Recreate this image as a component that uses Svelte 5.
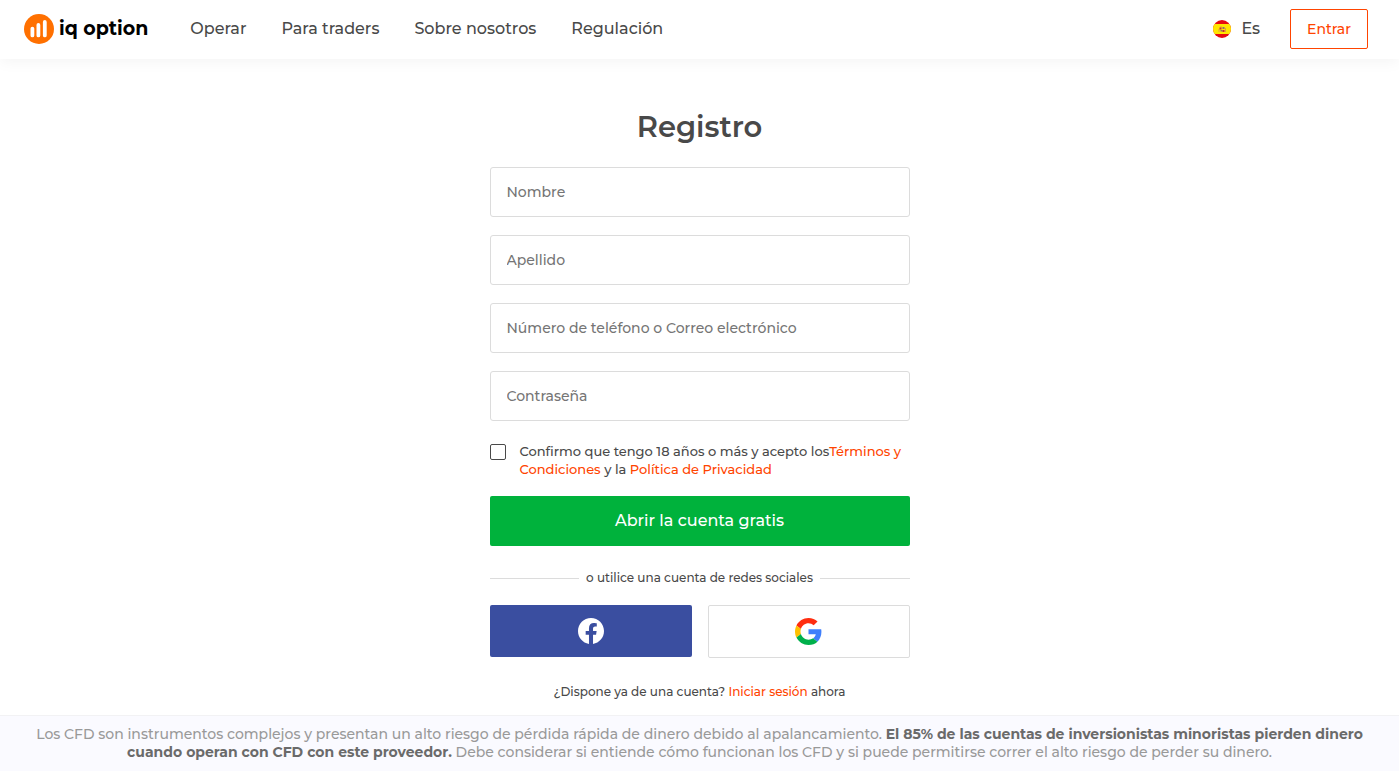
<script lang="ts">
	const navItems = ['Operar', 'Para traders', 'Sobre nosotros', 'Regulación'];

	const fields = [
		{ id: 'first-name', type: 'text', label: 'Nombre' },
		{ id: 'last-name', type: 'text', label: 'Apellido' },
		{ id: 'identifier', type: 'text', label: 'Número de teléfono o Correo electrónico' },
		{ id: 'password', type: 'password', label: 'Contraseña' }
	];

	let values: Record<string, string> = $state({});
	let accepted = $state(false);
</script>

<div class="page">
	<header class="header">
		<a class="logo" href="/" aria-label="iq option">
			<svg width="30" height="30" viewBox="0 0 30 30" aria-hidden="true">
				<circle cx="15" cy="15" r="15" fill="#ff7000" />
				<g stroke="#fff" stroke-width="3.8" stroke-linecap="round">
					<path d="M8.4 14.6v6.8M14.4 11v10.4M20.8 8v13.4" />
				</g>
			</svg>
			<span class="logo-text">iq option</span>
		</a>
		<nav class="nav">
			{#each navItems as item}
				<a href="/">{item}</a>
			{/each}
		</nav>
		<button class="language" type="button">
			<svg width="18" height="18" viewBox="0 0 18 18" aria-hidden="true">
				<clipPath id="flag"><circle cx="9" cy="9" r="9" /></clipPath>
				<g clip-path="url(#flag)">
					<path fill="#e60a10" d="M0 0h18v18H0z" />
					<path fill="#ffe600" d="M0 4h18v10H0z" />
					<path fill="#e0a040" d="M5.5 9h1v3h-1zM12 8h1v4h-1zM7 6.5h2v1H7z" />
					<path fill="#c4283a" d="M6.5 7.5h2v2h-2zM9.5 10h2v2h-2z" />
					<path fill="#8b6a75" d="M9.5 7h2v2h-2zM7.5 10h2v1.5h-2z" />
				</g>
			</svg>
			Es
		</button>
		<a class="login" href="/">Entrar</a>
	</header>

	<main class="main">
		<h1>Registro</h1>
		<form class="form" onsubmit={(e) => e.preventDefault()}>
			{#each fields as field}
				<input
					class="field"
					id={field.id}
					type={field.type}
					placeholder={field.label}
					aria-label={field.label}
					bind:value={values[field.id]}
				/>
			{/each}

			<div class="terms">
				<input id="terms" type="checkbox" bind:checked={accepted} />
				<label for="terms">
					Confirmo que tengo 18 años o más y acepto los<a href="/">Términos y Condiciones</a> y la
					<a href="/">Política de Privacidad</a>
				</label>
			</div>

			<button class="submit" type="submit">Abrir la cuenta gratis</button>
		</form>

		<div class="divider">o utilice una cuenta de redes sociales</div>

		<div class="social">
			<button class="facebook" type="button" aria-label="Facebook">
				<svg width="26" height="26" viewBox="0 0 24 24" aria-hidden="true">
					<path
						fill="#fff"
						d="M24 12.07C24 5.4 18.63 0 12 0S0 5.4 0 12.07c0 6.03 4.39 11.02 10.13 11.93v-8.44H7.08v-3.49h3.05V9.41c0-3.02 1.79-4.69 4.53-4.69 1.31 0 2.68.24 2.68.24v2.97h-1.51c-1.49 0-1.96.93-1.96 1.89v2.25h3.33l-.53 3.49h-2.8V24C19.61 23.09 24 18.1 24 12.07z"
					/>
				</svg>
			</button>
			<button class="google" type="button" aria-label="Google">
				<svg width="27" height="27" viewBox="0 0 48 48" aria-hidden="true">
					<path fill="#ff2d0f" d="M24 9.5c3.54 0 6.71 1.22 9.21 3.6l6.85-6.85C35.9 2.38 30.47 0 24 0 14.62 0 6.51 5.38 2.56 13.22l7.98 6.19C12.43 13.72 17.74 9.5 24 9.5z" />
					<path fill="#3f7ffb" d="M46.98 24.55c0-1.57-.15-3.09-.38-4.55H24v9.02h12.94c-.58 2.96-2.26 5.48-4.78 7.18l7.73 6c4.51-4.18 7.09-10.36 7.09-17.65z" />
					<path fill="#ffc000" d="M10.53 28.59c-.48-1.45-.76-2.99-.76-4.59s.27-3.14.76-4.59l-7.98-6.19C.92 16.46 0 20.12 0 24s.92 7.54 2.56 10.78l7.97-6.19z" />
					<path fill="#00b04b" d="M24 48c6.48 0 11.93-2.13 15.89-5.81l-7.73-6c-2.15 1.45-4.92 2.3-8.16 2.3-6.26 0-11.57-4.22-13.47-9.91l-7.98 6.19C6.51 42.62 14.62 48 24 48z" />
				</svg>
			</button>
		</div>

		<p class="signin">¿Dispone ya de una cuenta? <a href="/">Iniciar sesión</a> ahora</p>
	</main>

	<footer class="risk">
		Los CFD son instrumentos complejos y presentan un alto riesgo de pérdida rápida de dinero debido al
		apalancamiento. <strong>El 85% de las cuentas de inversionistas minoristas pierden dinero cuando
		operan con CFD con este proveedor.</strong> Debe considerar si entiende cómo funcionan los CFD y si
		puede permitirse correr el alto riesgo de perder su dinero.
	</footer>
</div>

<style>
	:global(body) {
		margin: 0;
		background: #fff;
	}

	.page {
		display: flex;
		flex-direction: column;
		min-height: 100vh;
		font-family: Montserrat, Inter, 'Open Sans', sans-serif;
		font-weight: 500;
		color: #494949;
	}

	.page * {
		box-sizing: border-box;
	}

	a {
		color: #ff4400;
		text-decoration: none;
	}

	button,
	input {
		font-family: inherit;
		font-weight: inherit;
	}

	button {
		cursor: pointer;
	}

	.header {
		display: flex;
		align-items: center;
		height: 59px;
		padding: 0 31px 2px 24px;
		box-shadow: 0 2px 15px rgba(0, 0, 0, 0.05);
	}

	.logo {
		display: flex;
		align-items: center;
		gap: 5px;
		color: #000;
	}

	.logo-text {
		font-size: 19px;
		font-weight: 700;
		line-height: 26px;
	}

	.nav {
		display: flex;
		flex: 1;
		gap: 35px;
		margin-left: 42px;
	}

	.nav a {
		color: #494949;
		font-size: 16px;
		line-height: 20px;
	}

	.language {
		display: flex;
		align-items: center;
		gap: 10px;
		margin-right: 30px;
		padding: 0;
		border: 0;
		background: none;
		color: #494949;
		font-size: 16px;
		line-height: 20px;
	}

	.login {
		padding: 10px 16px;
		border: 1px solid #ff4400;
		border-radius: 2px;
		font-size: 14px;
		line-height: 18px;
	}

	.main {
		flex: 1;
		width: 100%;
		max-width: 420px;
		margin: 0 auto;
	}

	h1 {
		margin: 48px 0 20px;
		font-size: 29px;
		font-weight: 600;
		line-height: 40px;
		text-align: center;
	}

	.form {
		display: flex;
		flex-direction: column;
		gap: 18px;
	}

	.field {
		width: 100%;
		height: 50px;
		padding: 0 16px;
		border: 1px solid #dcdcdc;
		border-radius: 3px;
		outline: none;
		color: #494949;
		font-size: 14px;
	}

	.field::placeholder {
		color: #757575;
	}

	.terms {
		display: flex;
		align-items: flex-start;
		gap: 14px;
		margin-top: 3px;
		font-size: 13px;
		line-height: 18px;
	}

	.terms input {
		flex: none;
		width: 16px;
		height: 16px;
		margin: 2px 0 0;
		border: 1px solid #494949;
		border-radius: 2px;
		appearance: none;
	}

	.terms input:checked {
		background: #00b23c;
	}

	.submit {
		height: 50px;
		padding: 0 16px 2px;
		border: 0;
		border-radius: 2px;
		background: #00b23c;
		color: #fff;
		font-size: 16px;
	}

	.divider {
		display: flex;
		align-items: center;
		gap: 7px;
		margin: 23px 0 18px;
		font-size: 12px;
		line-height: 18px;
	}

	.divider::before,
	.divider::after {
		flex: 1;
		height: 1px;
		background: #dcdcdc;
		content: '';
	}

	.social {
		display: grid;
		grid-template-columns: 1fr 1fr;
		gap: 16px;
	}

	.social button {
		display: flex;
		align-items: center;
		justify-content: center;
		height: 52px;
		padding: 0;
		border: 0;
		border-radius: 2px;
	}

	.social .facebook {
		background: #3a4ea0;
	}

	.social .google {
		height: 53px;
		border: 1px solid #dcdcdc;
		background: #fff;
	}

	.signin {
		margin: 25px 0 14px;
		font-size: 12px;
		line-height: 18px;
		text-align: center;
	}

	.risk {
		padding: 9px 16px 10px;
		border-top: 1px solid #f2f2f4;
		background: #fafaff;
		color: #999;
		font-size: 14px;
		line-height: 18px;
		text-align: center;
	}

	.risk strong {
		color: #6a6a6a;
		font-weight: 700;
	}
</style>
